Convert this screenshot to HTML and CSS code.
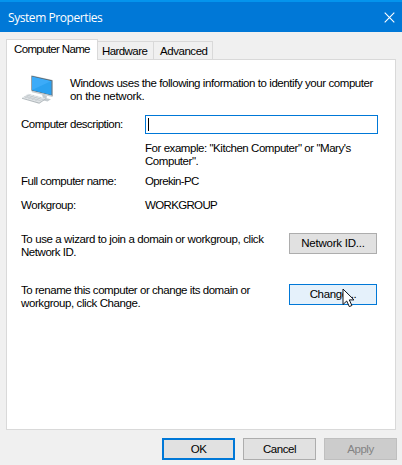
FILE: index.html
```
<!DOCTYPE html>
<html lang="en">
<head>
<meta charset="utf-8">
<title>System Properties</title>
<link rel="stylesheet" href="styles.css">
</head>
<body>
<div class="window">
  <header class="titlebar">
    <span class="title">System Properties</span>
    <svg class="close" width="11" height="11" viewBox="0 0 11 11"><path d="M.7.7l9.6 9.600M10.300.7L.7 10.300" stroke="#fff" stroke-width="1.1"/></svg>
  </header>
  <nav class="tabs">
    <div class="tab active"><span class="t-name">Computer Name</span></div>
    <div class="tab hardware"><span class="t-hard">Hardware</span></div>
    <div class="tab advanced"><span class="t-adv">Advanced</span></div>
  </nav>
  <main class="panel">
    <section class="intro">
      <svg class="pc" width="32" height="30" viewBox="0 0 32 30">
        <path d="M9.500 .3L30.700 4.900V21.500L9.500 16.500Z" fill="#c3cbd0"/>
        <path d="M9.500 .8L30 5.300V20.500L9.500 15.500Z" fill="#53636d"/>
        <path d="M10 1.500L29.300 5.900V19.700L10 15Z" fill="#3cabf8"/>
        <path d="M10 15L29.300 5.900V19.700Z" fill="#2ba1f0"/>
        <path d="M29.800 5.200L30.800 5.600V21L29.800 21Z" fill="#9aa4aa"/>
        <path d="M10 16L30.500 20.800V22L10 17.200Z" fill="#c6cdd1"/>
        <path d="M20 19.500L25 20.800L24.500 23.300L29 24.300L25.500 26.500L18 24.500L21 23Z" fill="#c3cace"/>
        <path d="M6.500 18.800L23.800 23.200L17.200 27.500L0 22.700Z" fill="#e0e4e7"/>
        <path d="M0 22.700L17.200 27.500L23.800 23.200V24.200L17.200 28.700L0 23.700Z" fill="#b3babe"/>
        <path d="M4.500 20.200L21.500 24.700M2.300 21.500L19.500 26M8.500 19.500L2.500 23.300M12 20.400L6 24.200M15.500 21.300L9.500 25.200M19 22.200L13 26.200" stroke="#bcc2c6" stroke-width=".6" fill="none"/>
      </svg>
      <p><span class="l1">Windows uses the following information to identify your computer</span><br><span class="l2">on the network.</span></p>
    </section>
    <section class="fields">
      <label class="desc-label" for="description">Computer description:</label>
      <div class="input" id="description"><i class="caret"></i></div>
      <p class="example"><span class="l3">For example: "Kitchen Computer" or "Mary's</span><br><span class="l4">Computer".</span></p>
      <span class="full-label">Full computer name:</span><span class="full-value">Oprekin-PC</span>
      <span class="group-label">Workgroup:</span><span class="group-value">WORKGROUP</span>
    </section>
    <section class="action join">
      <p><span class="l5">To use a wizard to join a domain or workgroup, click</span><br><span class="l6">Network ID.</span></p>
      <div class="button"><span class="b-net">Network ID...</span></div>
    </section>
    <section class="action rename">
      <p><span class="l7">To rename this computer or change its domain or</span><br><span class="l8">workgroup, click Change.</span></p>
      <div class="button hover"><span class="b-change">Change...</span>
        <svg class="cursor" width="14" height="20" viewBox="0 0 14 20"><path d="M1 1V16.500L4.700 13L7.300 18.600L9.900 17.500L7.300 11.900H12Z" fill="#fff" stroke="#10141c"/></svg>
      </div>
    </section>
  </main>
  <footer class="footer">
    <div class="button default"><span>OK</span></div>
    <div class="button"><span>Cancel</span></div>
    <div class="button disabled"><span>Apply</span></div>
  </footer>
</div>
</body>
</html>
```
FILE: styles.css
```
* { box-sizing: border-box; }
body { margin: 0; background: #f0f0f0; }
p { margin: 0; }
.window {
  width: 402px; height: 465px; overflow: hidden;
  display: flex; flex-direction: column;
  background: #f0f0f0; color: #000;
  font: 11.5px/13px "Liberation Sans", Arial, sans-serif;
  letter-spacing: -0.45px; white-space: nowrap;
}
.titlebar {
  height: 32px; flex: none; padding: 1px 8px 0 8px;
  display: flex; justify-content: space-between; align-items: center;
  background: #0078d7; border-top: 2px solid #0494ed; color: #fff;
}
.title { font: 12px/16px "Open Sans", sans-serif; letter-spacing: -0.43px; }
.close { margin-right: -1px; }
.tabs { display: flex; align-items: flex-end; height: 28px; flex: none; padding-left: 6px; }
.tab {
  height: 19px; padding: 3px 0 0 4px; background: #f0f0f0;
  border: 1px solid #d9d9d9; border-left: 0;
}
.active {
  width: 92px; height: 21px; padding: 3px 0 0 7px; background: #fff;
  border-left: 1px solid #d9d9d9; border-bottom: 0; position: relative; z-index: 1;
}
.hardware { width: 56px; }
.advanced { width: 59px; padding-left: 6px; }
.t-name { letter-spacing: -0.66px; }
.t-hard { letter-spacing: -0.58px; }
.panel {
  width: 390px; height: 371px; margin: -1px 0 0 6px; flex: none;
  border: 1px solid #d9d9d9; background: #fff; padding: 15px 17px 0 14px;
}
.intro { display: flex; height: 40px; }
.intro p { padding-top: 2px; margin-left: 16px; }
.l1 { letter-spacing: -0.43px; }
.l2 { letter-spacing: -0.28px; }
.pc { margin-left: 1px; flex: none; }
.fields {
  display: grid; grid-template-columns: 124px 233px;
  grid-template-rows: 27px 33px 24px 24px; height: 118px;
}
.desc-label, .full-label { letter-spacing: -0.51px; }
.full-value, .group-value { letter-spacing: -0.65px; }
.desc-label { padding-top: 3px; }
.input { width: 233px; height: 19px; border: 1px solid #0078d7; background: #fff; }
.caret { display: block; width: 1px; height: 13px; margin: 2px 0 0 2px; background: #000; }
.example { grid-column: 2; }
.action { display: flex; justify-content: space-between; height: 51px; padding-right: 1px; }
.l5 { letter-spacing: -0.4px; }
.l8 { letter-spacing: -0.41px; }
.b-net { letter-spacing: -0.22px; }
.b-change { letter-spacing: -0.35px; }
.button {
  width: 88px; height: 21px; display: flex; align-items: center; justify-content: center;
  background: #e1e1e1; border: 1px solid #adadad;
}
.hover { background: #e5f1fb; border-color: #0078d7; position: relative; }
.cursor { position: absolute; left: 52px; top: 3px; }
.footer { display: flex; justify-content: flex-end; gap: 8px; padding: 8px 5px 0 0; }
.footer .button { width: 73px; height: 22px; }
.footer .default { border: 2px solid #0078d7; }
.footer .disabled { background: #ccc; border-color: #bfbfbf; color: #838383; }
```
